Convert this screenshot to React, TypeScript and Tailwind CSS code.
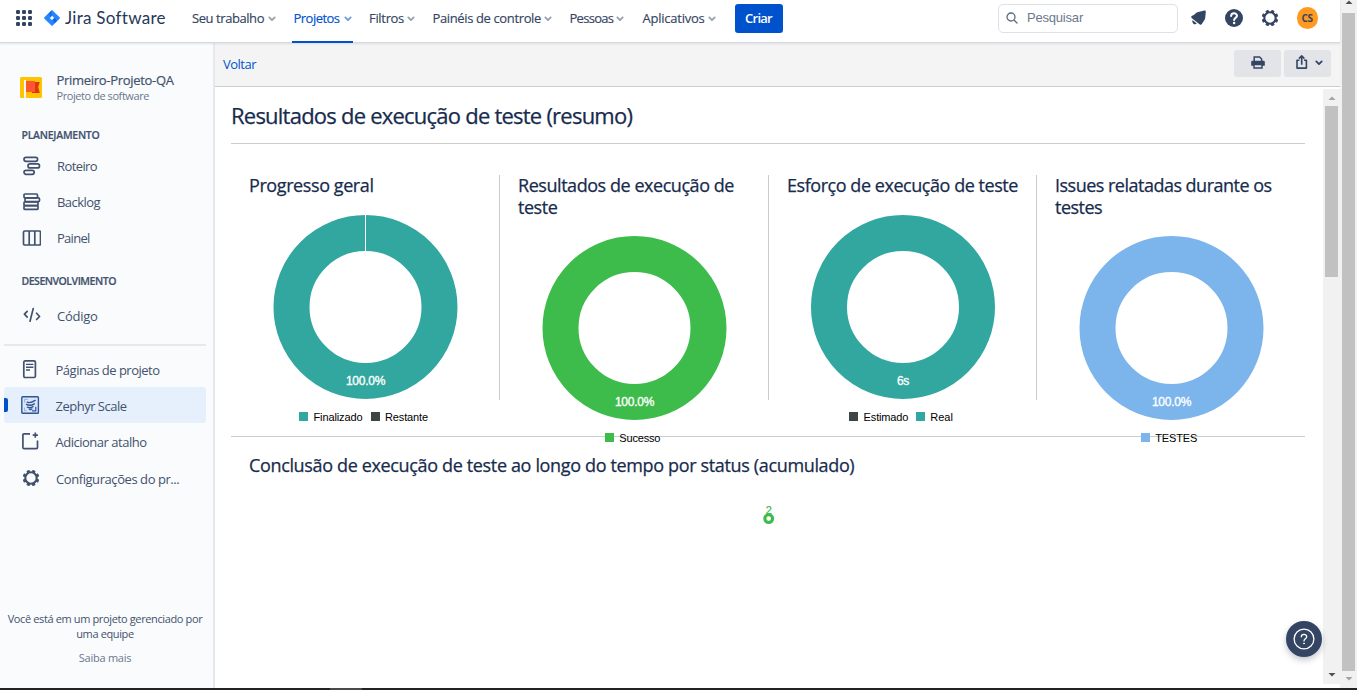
import type { ReactNode } from "react";

function Chevron({ className }: { className: string }) {
  return (
    <svg viewBox="0 0 8 6" className={`h-[6px] w-[8px] shrink-0 ${className}`} fill="none" stroke="currentColor" strokeWidth="1.8" strokeLinecap="round" strokeLinejoin="round">
      <path d="M1.3 1.4 4 4.1 6.7 1.4" />
    </svg>
  );
}

function GearIcon({ className }: { className: string }) {
  const teeth = [0, 45, 90, 135, 180, 225, 270, 315];
  return (
    <svg viewBox="0 0 18 18" className={`h-[18px] w-[18px] shrink-0 ${className}`}>
      <circle cx="9" cy="9" r="5.7" fill="none" stroke="currentColor" strokeWidth="2.1" />
      {teeth.map((a) => (
        <rect key={a} x="7.3" y="0.7" width="3.4" height="2.6" rx="0.9" fill="currentColor" transform={`rotate(${a + 22.5} 9 9)`} />
      ))}
    </svg>
  );
}

const navItems = [
  { label: "Seu trabalho", box: "w-[83.5px] ml-[26px]", text: "tracking-[-0.43px]", active: false },
  { label: "Projetos", box: "w-[58px] ml-[18px]", text: "tracking-[-0.52px]", active: true },
  { label: "Filtros", box: "w-[46px] ml-[17.5px]", text: "tracking-[-0.32px]", active: false },
  { label: "Painéis de controle", box: "w-[119.5px] ml-[17.5px]", text: "tracking-[-0.37px]", active: false },
  { label: "Pessoas", box: "w-[54.5px] ml-[17.5px]", text: "tracking-[-0.72px]", active: false },
  { label: "Aplicativos", box: "w-[73px] ml-[18.5px]", text: "tracking-[-0.24px]", active: false },
];

function TopBar() {
  return (
    <header className="relative z-10 flex h-[43px] shrink-0 border-b border-[#d5dade] bg-white shadow-[0_1px_2px_rgba(9,30,66,0.1)]">
      <svg viewBox="0 0 16 16" className="ml-4 mt-[10px] h-4 w-4 shrink-0" fill="#344563">
        {[0, 6, 12].map((y) => [0, 6, 12].map((x) => <rect key={`${x}-${y}`} x={x} y={y} width="4" height="4" rx="1.2" />))}
      </svg>
      <svg viewBox="0 0 16 16" className="ml-3 mt-[10px] h-4 w-4 shrink-0">
        <defs>
          <linearGradient id="jira-top" x1="1" y1="0.2" x2="0.3" y2="1">
            <stop offset="0.1" stopColor="#0052cc" />
            <stop offset="0.8" stopColor="#2684ff" />
          </linearGradient>
        </defs>
        <path d="M8 0 15.6 7.3Q16.2 8 15.6 8.7L8 16 0.4 8.7Q-0.2 8 0.4 7.3ZM8 5.7 5.7 8 8 10.3 10.3 8Z" fill="#2684ff" fillRule="evenodd" />
        <path d="M8 5.7C6.8 4.4 6.8 2.4 8 0.3L3.2 5 5.7 7.9Z" fill="url(#jira-top)" />
        <path d="M8 10.3c1.2 1.3 1.2 3.3 0 5.4L12.8 11 10.3 8.1Z" fill="url(#jira-top)" />
      </svg>
      <div className="ml-[5px] h-[36px] w-[101px] whitespace-nowrap font-['Lato',sans-serif] text-[17px] leading-[35px] tracking-[0.28px] text-[#253858]">Jira Software</div>
      <nav className="flex">
        {navItems.map((n) => (
          <div key={n.label} className={`relative flex h-[43px] shrink-0 justify-between pt-px ${n.box} ${n.active ? "text-[#0052cc]" : "text-[#344563]"}`}>
            <span className={`whitespace-nowrap text-[13px] leading-[35px] [-webkit-text-stroke:0.15px] ${n.text}`}>{n.label}</span>
            <Chevron className={`mt-[15px] ${n.active ? "text-[#6b9be0]" : "text-[#97a0af]"}`} />
            {n.active && <span className="absolute bottom-0 -left-[2px] h-[2px] w-[61px] bg-[#0052cc]" />}
          </div>
        ))}
      </nav>
      <button className="ml-[19px] mt-1 h-[29px] w-12 shrink-0 rounded-[3px] bg-[#0052cc] text-[13px] font-semibold leading-[29px] tracking-[-0.73px] text-white">Criar</button>
      <div className="ml-[215px] mt-1 flex h-[29px] w-[180px] shrink-0 items-center rounded-[5px] border border-[#dfe1e6] bg-white pb-px pl-[7px]">
        <svg viewBox="0 0 12 12" className="h-3 w-3" fill="none" stroke="#5e6c84" strokeWidth="1.3" strokeLinecap="round">
          <circle cx="5" cy="5" r="4" />
          <path d="m8.2 8.2 2.8 2.8" />
        </svg>
        <span className="-mt-px ml-[9.5px] font-['Liberation_Sans',sans-serif] text-[13px] tracking-[-0.2px] text-[#6b778c]">Pesquisar</span>
      </div>
      <svg viewBox="0 0 18 18" className="ml-[12px] mt-[9px] h-[18px] w-[18px] shrink-0" fill="#344563">
        <path d="M14.4 1.6Q16 1.3 15.8 2.9L15.2 9Q14.9 11 13.6 12.3L11.8 15Q11 16.4 9.8 15.4L1.6 8.9Q0.5 7.9 1.8 7.1L4.5 5.5Q5.5 3.9 7.3 3.2Z" />
        <path d="M2.4 11 6.8 14.5Q5.2 16 3.4 14.7 1.8 13.2 2.4 11Z" />
      </svg>
      <svg viewBox="0 0 18 18" className="ml-[17px] mt-[9px] h-[18px] w-[18px] shrink-0">
        <circle cx="9" cy="9" r="9" fill="#344563" />
        <path d="M6.1 7.1C6.1 3.4 12 3.5 12 6.8 12 8.9 9.1 8.8 9.1 11" fill="none" stroke="white" strokeWidth="2" strokeLinecap="round" />
        <circle cx="9.1" cy="13.9" r="1.25" fill="white" />
      </svg>
      <GearIcon className="ml-[18px] mt-[9px] text-[#344563]" />
      <div className="ml-[18px] mt-[7px] flex h-[22px] w-[21px] shrink-0 items-center justify-center rounded-full bg-[#ff991f] text-[10px] font-bold tracking-[-0.5px] text-[#344563]">CS</div>
    </header>
  );
}

function SideItem({ icon, label, text, labelClass = "", className = "" }: { icon: ReactNode; label: string; text: string; labelClass?: string; className?: string }) {
  return (
    <div className={`relative ml-1 mr-[7px] flex h-9 shrink-0 items-center rounded-[3px] pl-[17px] ${className}`}>
      <svg viewBox="0 0 20 20" className="h-5 w-5 shrink-0" fill="none" stroke="#42526e" strokeWidth="1.7" strokeLinejoin="round">
        {icon}
      </svg>
      <span className={`whitespace-nowrap text-[13px] text-[#42526e] ${labelClass || "ml-4 pt-0.5"} ${text}`}>{label}</span>
    </div>
  );
}

function Sidebar() {
  return (
    <aside className="flex w-[215px] shrink-0 flex-col border-r-2 border-[#e6e8ea] bg-[#fafbfc]">
      <div className="flex h-[78px] pl-5 pt-[29px]">
        <svg viewBox="0 0 22 21" className="mt-[5px] h-[21px] w-[22px] shrink-0">
          <rect width="22" height="21" rx="1.5" fill="#ffc400" />
          <path d="M4 3h2v18H4z" fill="#f4f5f7" />
          <path d="M12 5h7.8l-1.6 5 1.6 6H12z" fill="#de350b" />
          <path d="M6 4h9v11H6z" fill="#ff5630" />
        </svg>
        <div className="ml-[14.5px] flex flex-col whitespace-nowrap">
          <span className="text-[13px] leading-4 tracking-[-0.3px] text-[#42526e] [-webkit-text-stroke:0.2px]">Primeiro-Projeto-QA</span>
          <span className="text-[11px] leading-4 tracking-[-0.43px] text-[#6b778c]">Projeto de software</span>
        </div>
      </div>
      <div className="h-[27px] pl-[21.5px] pt-[6px] text-[10.5px] font-semibold leading-4 tracking-[-0.27px] text-[#42526e] [-webkit-text-stroke:0.2px]">PLANEJAMENTO</div>
      <SideItem label="Roteiro" text="tracking-[-0.6px]" icon={<><rect x="3" y="1.3" width="13.6" height="4" rx="2" /><rect x="7" y="7.9" width="11.5" height="4" rx="2" /><rect x="3" y="14.3" width="10.2" height="4" rx="2" /></>} />
      <SideItem label="Backlog" text="tracking-[-0.55px]" icon={<><rect x="3" y="2" width="13.5" height="3.8" rx="1" /><rect x="4" y="5.9" width="14.5" height="3.8" rx="1.2" /><rect x="3" y="9.8" width="14" height="3.8" rx="1" /><rect x="3" y="13.6" width="14" height="3.8" rx="1" /></>} />
      <SideItem label="Painel" text="tracking-[-0.73px]" icon={<><rect x="2.5" y="3" width="17" height="14" rx="1.2" /><path d="M8.2 3v14M13.8 3v14" /></>} />
      <div className="h-[42px] pl-[21.5px] pt-[17px] text-[10.5px] font-semibold leading-4 tracking-[-0.48px] text-[#42526e] [-webkit-text-stroke:0.2px]">DESENVOLVIMENTO</div>
      <SideItem label="Código" text="tracking-[-0.27px]" icon={<path d="M6.2 5.3 3.4 8.2l2.8 3M15.6 7.2l3 3.3-3 3M12.2 2.6 9 15.2" strokeLinecap="round" />} />
      <div className="ml-1 mr-[7px] mt-[10px] h-[2px] shrink-0 bg-[#e6e8ea]" />
      <SideItem label="Páginas de projeto" className="mt-[5px]" labelClass="ml-[14.5px] pt-[3px]" text="tracking-[-0.49px]" icon={<><rect x="2.8" y="1.9" width="11.6" height="16.6" rx="1.3" /><path d="M5 5.4h7.4M5 8.2h7.4M5 11h4" strokeWidth="1.4" /></>} />
      <SideItem
        label="Zephyr Scale"
        className="bg-[#e6effc] before:absolute before:left-0 before:top-[11px] before:h-[14px] before:w-1 before:rounded-r-[2px] before:bg-[#0052cc]"
        labelClass="ml-[14.5px] pt-[3px]"
        text="tracking-[-0.5px]"
        icon={<g stroke="#2f5597" strokeWidth="0.8" strokeLinecap="round"><rect x="0.8" y="1.7" width="16.6" height="16.6" rx="0.8" fill="#dbe7f9" strokeWidth="1.4" /><path d="M3.6 7.2V4.4h2.8M3.6 13v2.8h1.6" stroke="#7f9fd0" /><path d="M14.8 12.2v3.6h-3.4" strokeWidth="1.2" /><path d="M6.2 7.2q3 1.5 8-1.8M5.4 9.4q3.8 2 8-.6M6.4 12.2q2.6 1.2 5.6-.6M8.4 14.4q1.4.3 2.6-.4" strokeWidth="1.4" /></g>}
      />
      <SideItem label="Adicionar atalho" labelClass="ml-[14.5px] pt-[3px]" text="tracking-[-0.49px]" icon={<><path d="M9 2.8H3Q1.9 2.8 1.9 3.9v12.7q0 1.1 1.1 1.1h12.4q1.1 0 1.1-1.1V9.5" /><path d="M14.3 1.6v5.2M11.7 4.2h5.2" /></>} />
      <div className="ml-1 mr-[7px] mt-px flex h-9 shrink-0 items-center pl-[18px]">
        <GearIcon className="text-[#42526e]" />
        <span className="ml-[16px] whitespace-nowrap pt-[3px] text-[13px] tracking-[-0.43px] text-[#42526e]">Configurações do pr...</span>
      </div>
      <div className="mb-[23px] mt-auto flex flex-col items-center pr-[3px] text-center text-[11px] leading-[15px]">
        <p className="whitespace-nowrap tracking-[-0.37px] text-[#42526e]">
          Você está em um projeto gerenciado por
          <br />
          uma equipe
        </p>
        <a className="mt-[9px] tracking-[-0.24px] text-[#6b778c]">Saiba mais</a>
      </div>
    </aside>
  );
}

type Series = { name: string; color: string; text: string };

function Donut({ color, value, split, cx = 93.5 }: { color: string; value: string; split?: boolean; cx?: number }) {
  return (
    <svg viewBox="0 0 186 184" className="h-[184px] w-[186px] shrink-0">
      <circle cx={cx} cy="92" r="74" fill="none" stroke={color} strokeWidth="36" />
      {split && <path d={`M${cx} 0v36`} stroke="white" strokeWidth="1" />}
      <text x={cx} y="170" textAnchor="middle" fill="white" className="font-['Liberation_Sans',sans-serif] text-[12px] tracking-[-0.25px]" stroke="white" strokeWidth="0.35">
        {value}
      </text>
    </svg>
  );
}

function ChartCard({ title, titleClass, color, value, split, series, cx, legendClass, className }: { title: string; titleClass: string; color: string; value: string; split?: boolean; series: Series[]; cx?: number; legendClass: string; className: string }) {
  return (
    <section className={`flex h-[225px] shrink-0 flex-col items-center border-[#cccccc] ${className}`}>
      <h2 className={`-mt-px w-full shrink-0 pl-[18px] text-[18px] font-medium leading-[22px] [-webkit-text-stroke:0.25px] ${titleClass}`}>{title}</h2>
      <Donut color={color} value={value} split={split} cx={cx} />
      <div className={`mt-[11px] flex shrink-0 font-['Liberation_Sans',sans-serif] text-[11px] leading-[14px] text-black ${legendClass}`}>
        {series.map((s) => (
          <div key={s.name} className="flex items-center">
            <span className="-mt-px h-[9px] w-[9px]" style={{ backgroundColor: s.color }} />
            <span className={`ml-[5.5px] whitespace-nowrap ${s.text}`}>{s.name}</span>
          </div>
        ))}
      </div>
    </section>
  );
}

function Toolbar() {
  return (
    <div className="flex h-[44px] shrink-0 items-start border-b border-[#cccccc] bg-[#f4f4f4] pl-2 pr-[9px]">
      <a className="mt-[11px] text-[13px] leading-5 tracking-[-0.51px] text-[#0052cc]">Voltar</a>
      <div className="ml-auto mt-[7px] flex gap-[3px]">
        <button className="flex h-[27px] w-[47px] justify-center rounded-[3px] bg-[#e3e4e8] pt-[6px]">
          <svg viewBox="0 0 14 13" className="h-[13px] w-[14px]" fill="none" stroke="#344563">
            <path d="M3.2 5V1h5.4l2 2V5" strokeWidth="1.5" />
            <path d="M1.4 4.8h11.2q1.2 0 1.2 1.2v3.8H.2V6Q.2 4.8 1.4 4.8Z" fill="#344563" stroke="none" />
            <path d="M3 8.6h8v3.4H3z" fill="#e3e4e8" strokeWidth="1.4" />
          </svg>
        </button>
        <button className="flex h-[27px] w-[47px] rounded-[3px] bg-[#e3e4e8] pl-[12px] pt-[5px]">
          <svg viewBox="0 0 12 14" className="h-[14px] w-[12px]" fill="none" stroke="#344563" strokeWidth="1.6" strokeLinejoin="round">
            <path d="M3.4 5.2H1v7.9h9.4V5.2H8M5.7 9.8V1.4M3 3.6l2.7-2.7 2.7 2.7" />
          </svg>
          <Chevron className="ml-[7px] mt-[5px] text-[#344563]" />
        </button>
      </div>
    </div>
  );
}

function Arrow({ up, color }: { up?: boolean; color: string }) {
  return (
    <svg viewBox="0 0 8 4" className="h-1 w-2 shrink-0" fill={color}>
      <path d={up ? "M0.5 4 4 .5 7.5 4Z" : "M0.5 0 4 3.5 7.5 0Z"} />
    </svg>
  );
}

function Report() {
  return (
    <div className="flex min-h-0 flex-1">
      <main className="flex w-[1108px] shrink-0 flex-col pl-4 text-[#172b4d]">
        <h1 className="h-[57px] w-[1074px] border-b border-[#cccccc] pt-[12px] text-[22px] font-medium leading-8 tracking-[-0.77px] [-webkit-text-stroke:0.25px]">Resultados de execução de teste (resumo)</h1>
        <div className="flex h-[293px] w-[1074px] shrink-0 border-b border-[#cccccc] pt-[31px]">
          <ChartCard className="w-[269px] border-r" title="Progresso geral" titleClass="mb-[19px] tracking-[-0.41px]" color="#31a79f" value="100.0%" split legendClass="gap-[8px] mr-[3px]" series={[{ name: "Finalizado", color: "#31a79f", text: "tracking-[-0.11px]" }, { name: "Restante", color: "#3e4547", text: "tracking-[-0.13px]" }]} />
          <ChartCard className="w-[269px] border-r" title="Resultados de execução de teste" titleClass="mb-[18px] tracking-[-0.45px]" color="#3dbb4b" value="100.0%" legendClass="mr-[3px]" series={[{ name: "Sucesso", color: "#3dbb4b", text: "tracking-[-0.18px]" }]} />
          <ChartCard className="w-[268px] border-r" title="Esforço de execução de teste" titleClass="mb-[19px] whitespace-nowrap tracking-[-0.45px]" color="#31a79f" value="6s" cx={93} legendClass="gap-[7.5px] mr-[3px]" series={[{ name: "Estimado", color: "#3e4547", text: "tracking-[-0.15px]" }, { name: "Real", color: "#31a79f", text: "" }]} />
          <ChartCard className="w-[268px]" title="Issues relatadas durante os testes" titleClass="mb-[18px] pr-4 tracking-[-0.51px]" color="#7cb4ec" value="100.0%" legendClass="mr-1" series={[{ name: "TESTES", color: "#7cb4ec", text: "tracking-[-0.13px]" }]} />
        </div>
        <h2 className="mt-[16px] pl-[18px] text-[18px] font-medium leading-6 tracking-[-0.35px] [-webkit-text-stroke:0.25px]">Conclusão de execução de teste ao longo do tempo por status (acumulado)</h2>
        <svg viewBox="0 0 20 24" className="ml-[528px] mt-[25px] h-6 w-5">
          <text x="9.7" y="12" textAnchor="middle" fill="#3dbb4b" stroke="#3dbb4b" strokeWidth="0.2" className="font-['Liberation_Sans',sans-serif] text-[11px]">2</text>
          <circle cx="9.7" cy="16.6" r="3.9" fill="white" stroke="#3dbb4b" strokeWidth="3.1" />
        </svg>
      </main>
      <div className="mb-[4px] mt-[2px] flex w-[17px] shrink-0 flex-col items-center bg-[#f1f1f1] pb-[7px] pt-[7px]">
        <Arrow up color="#a3a3a3" />
        <div className="mt-[6px] h-[171px] w-[13px] bg-[#c1c1c1]" />
        <div className="mt-auto">
          <Arrow color="#505050" />
        </div>
      </div>
    </div>
  );
}

export default function App() {
  return (
    <div className="relative flex h-[690px] w-[1357px] flex-col overflow-hidden bg-[#262223] font-['Open_Sans','Noto_Sans',sans-serif]">
      <div className="flex h-[688px] bg-white">
        <div className="flex w-[1340px] shrink-0 flex-col">
          <TopBar />
          <div className="flex min-h-0 flex-1">
            <Sidebar />
            <div className="flex w-[1125px] flex-col bg-white">
              <Toolbar />
              <Report />
            </div>
          </div>
        </div>
        <div className="flex w-[17px] flex-col items-center bg-[#f1f1f1]">
          <Arrow up color="#505050" />
          <div className="mt-[9px] h-[658px] w-[13px] bg-[#c1c1c1]" />
          <div className="mt-[6px]">
            <Arrow color="#a3a3a3" />
          </div>
        </div>
      </div>
      <div className="ml-[330px] h-[2px] w-8 bg-[#4c4849]" />
      <button className="absolute left-[1286px] top-[621px] flex h-9 w-9 items-center justify-center rounded-full bg-[#344563] shadow-[0_3px_6px_rgba(9,30,66,0.25)]">
        <svg viewBox="0 0 22 22" className="h-[22px] w-[22px]" fill="none" stroke="white" strokeWidth="1.3" strokeLinecap="round">
          <circle cx="11" cy="11" r="9.9" />
          <path d="M8.3 8.8c0-3.4 5.4-3.3 5.4-.1 0 2-2.7 2-2.7 4.2" />
          <circle cx="11" cy="15.4" r="0.5" fill="white" strokeWidth="0.8" />
        </svg>
      </button>
    </div>
  );
}
